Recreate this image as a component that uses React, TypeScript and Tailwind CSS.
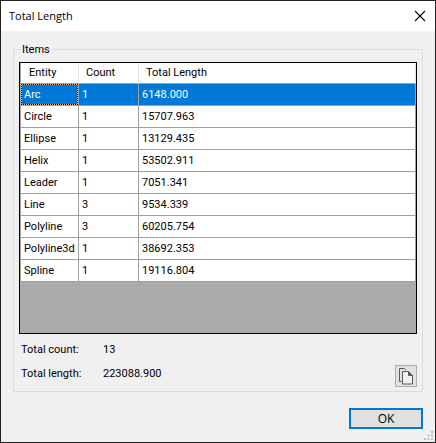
interface EntityRow {
  entity: string;
  count: number;
  length: string;
}

const rows: EntityRow[] = [
  { entity: 'Arc', count: 1, length: '6148.000' },
  { entity: 'Circle', count: 1, length: '15707.963' },
  { entity: 'Ellipse', count: 1, length: '13129.435' },
  { entity: 'Helix', count: 1, length: '53502.911' },
  { entity: 'Leader', count: 1, length: '7051.341' },
  { entity: 'Line', count: 3, length: '9534.339' },
  { entity: 'Polyline', count: 3, length: '60205.754' },
  { entity: 'Polyline3d', count: 1, length: '38692.353' },
  { entity: 'Spline', count: 1, length: '19116.804' },
];

const SELECTED = 'Arc';
const TOTAL_LENGTH = '223088.900';

function CloseIcon() {
  return (
    <svg width="12" height="12" viewBox="0 0 12 12" fill="none" stroke="#000" strokeWidth="1.1">
      <path d="M1 1l10 10M11 1L1 11" />
    </svg>
  );
}

function CopyIcon() {
  return (
    <svg width="14" height="17" viewBox="0 0 14 17" fill="none" stroke="#5a5a5a">
      <path d="M2.5 13.5H.5V.5H5.5L7 2" />
      <path d="M3.5 3.5h6l4 4v8.5h-10z" fill="#f0f0f0" />
      <path d="M9.5 3.5v4h4z" fill="#5a5a5a" />
    </svg>
  );
}

function SizeGrip() {
  return (
    <svg width="9" height="9" viewBox="0 0 9 9" fill="#bdbdbd" className="absolute right-0.5 bottom-0.5">
      <path d="M7 0h2v2h-2zM3.5 3.5h2v2h-2zM7 3.5h2v2h-2zM0 7h2v2h-2zM3.5 7h2v2h-2zM7 7h2v2h-2z" />
    </svg>
  );
}

export default function App() {
  const totalCount = rows.reduce((sum, row) => sum + row.count, 0);

  return (
    <div className="relative min-h-screen flex flex-col border border-[#232024] bg-[#f0f0f0] font-[Roboto,'Liberation_Sans',sans-serif] text-[11px] leading-4 text-black">
      {/* Title bar */}
      <header className="flex items-center justify-between h-[30px] px-2 bg-white">
        <h1 className="font-['Open_Sans','Noto_Sans',sans-serif] text-[11px]">Total Length</h1>
        <button type="button" aria-label="Close" className="p-px">
          <CloseIcon />
        </button>
      </header>

      <main className="flex-1 flex flex-col px-3 pt-[18px]">
        <section
          aria-labelledby="items-title"
          className="flex-1 flex flex-col border border-[#dcdcdc] px-[5px] pb-1"
        >
          <h2 id="items-title" className="self-start -mt-2 mb-1 ml-0.5 px-px bg-[#f0f0f0]">
            Items
          </h2>

          {/* Data grid */}
          <div className="flex-1 border border-black bg-[#ababab] pl-px">
            <table className="w-full table-fixed border-separate border-spacing-0 text-left">
              <colgroup>
                <col className="w-[58px]" />
                <col className="w-[60px]" />
                <col />
              </colgroup>
              <thead>
                <tr className="h-[21px] bg-white">
                  <th className="p-0 pl-2 font-normal border-b border-b-[#a0a0a0] border-r border-r-[#e5e5e5]">Entity</th>
                  <th className="p-0 pl-[7px] font-normal border-b border-b-[#a0a0a0] border-r border-r-[#e5e5e5]">Count</th>
                  <th className="p-0 pl-[7px] font-normal border-b border-b-[#a0a0a0] border-r border-r-[#e5e5e5]">Total Length</th>
                </tr>
              </thead>
              <tbody>
                {rows.map(row => {
                  const selected = row.entity === SELECTED;

                  return (
                    <tr
                      key={row.entity}
                      aria-selected={selected}
                      className={selected ? 'h-[22px] bg-[#0078d7] text-white' : 'h-[22px] bg-white'}
                    >
                      <td className="p-0 border-r border-b border-[#a0a0a0]">
                        {selected ? (
                          // focus rectangle: black dots over a light line
                          <div className="border border-dotted border-black bg-[#d9b48c]">
                            <div className="h-[19px] pl-0.5 leading-[19px] bg-[#0078d7]">{row.entity}</div>
                          </div>
                        ) : (
                          <div className="pl-[3px]">{row.entity}</div>
                        )}
                      </td>
                      <td className="p-0 pl-[3px] border-r border-b border-[#a0a0a0]">{row.count}</td>
                      <td className="p-0 pl-[3px] border-r border-b border-[#a0a0a0]">{row.length}</td>
                    </tr>
                  );
                })}
              </tbody>
            </table>
          </div>

          {/* Totals */}
          <div className="flex items-end justify-between pt-2">
            <dl className="grid grid-cols-[82px_auto] gap-y-2 pl-0.5 pb-[5px]">
              <dt>Total count:</dt>
              <dd>{totalCount}</dd>
              <dt>Total length:</dt>
              <dd>{TOTAL_LENGTH}</dd>
            </dl>
            <button
              type="button"
              aria-label="Copy"
              className="flex items-center justify-center size-[22px] border border-[#adadad] bg-[#e1e1e1]"
            >
              <CopyIcon />
            </button>
          </div>
        </section>
      </main>

      <footer className="flex justify-end px-3 pt-4 pb-[13px]">
        <button
          type="button"
          className="w-[74px] h-[21px] border-2 border-[#0078d7] bg-[#e1e1e1] font-['Open_Sans','Noto_Sans',sans-serif] text-[12px] leading-4"
        >
          OK
        </button>
      </footer>

      <SizeGrip />
    </div>
  );
}
